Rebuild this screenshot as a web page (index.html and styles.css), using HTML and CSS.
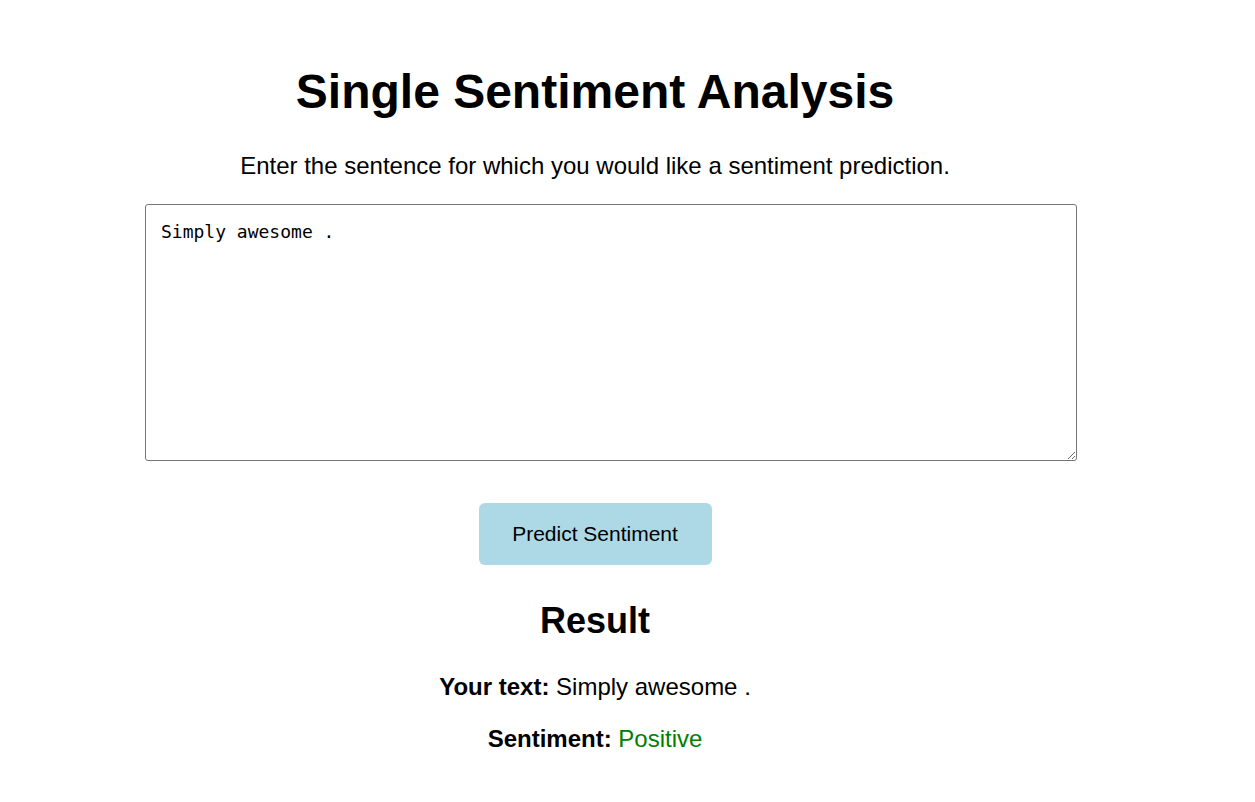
FILE: index.html
```html
<!DOCTYPE html>
<html lang="en">
<head>
<meta charset="utf-8">
<title>Single Sentiment Analysis</title>
<link rel="stylesheet" href="styles.css">
</head>
<body>
<main class="container">
  <h1 class="title">Single Sentiment Analysis</h1>
  <p class="intro">Enter the sentence for which you would like a sentiment prediction.</p>
  <form class="form">
    <textarea class="input" rows="10">Simply awesome .</textarea>
    <div class="actions">
      <button type="button" class="btn">Predict Sentiment</button>
    </div>
  </form>
  <section class="result">
    <h2 class="result-title">Result</h2>
    <p class="line"><strong>Your text:</strong> Simply awesome .</p>
    <p class="line"><strong>Sentiment:</strong> <span class="positive">Positive</span></p>
  </section>
</main>
</body>
</html>
```
FILE: styles.css
```css
html, body {
  margin: 0;
  padding: 0;
  background: #ffffff;
}
body {
  font-family: "Liberation Sans", Arial, sans-serif;
  color: #000;
  padding-right: 65px;
}
.container {
  width: 900px;
  margin: 0 auto;
  padding-top: 40px;
  text-align: center;
}
.title {
  font-size: 48px;
  font-weight: bold;
  margin: 24px 0 0;
  line-height: 56px;
}
.intro {
  font-size: 24px;
  margin: 32px 0 0;
  line-height: 28px;
}
.form {
  display: block;
  margin-top: 24px;
}
.input {
  display: block;
  width: 100%;
  height: 225px;
  padding: 16px 15px 14px;
  border: 1px solid #767676;
  border-radius: 3px;
  font-family: "DejaVu Sans Mono", "Liberation Mono", monospace;
  font-size: 18px;
  line-height: 22px;
  resize: vertical;
  margin: 0;
  text-align: left;
}
.actions {
  display: flex;
  justify-content: center;
  margin-top: 42px;
}
.btn {
  width: 233px;
  height: 62px;
  background: #add8e6;
  border: none;
  border-radius: 6px;
  font-family: "Liberation Sans", Arial, sans-serif;
  font-size: 21px;
  color: #000;
  padding: 0;
}
.result {
  margin-top: 34px;
}
.result-title {
  font-size: 36px;
  margin: 0;
  line-height: 44px;
}
.line {
  font-size: 24px;
  margin: 30px 0 0;
  line-height: 28px;
}
.line + .line {
  margin-top: 24px;
}
.positive {
  color: #008000;
}
```
